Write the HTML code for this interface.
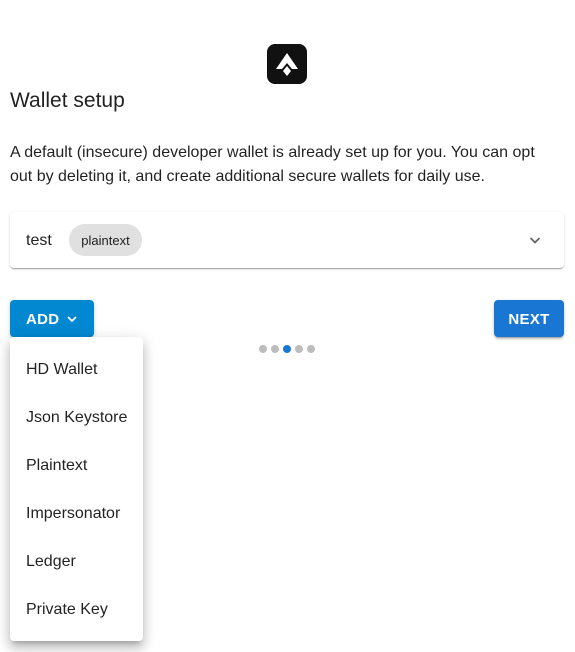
<!DOCTYPE html>
<html><head><style>
body{margin:0;width:575px;height:652px;background:#fff;font-family:"Liberation Sans",sans-serif;color:rgba(0,0,0,.87);position:relative;overflow:hidden}
.abs{position:absolute}
h1{position:absolute;left:10px;top:87px;margin:0;font-size:21px;font-weight:500;line-height:28px}
.desc{left:10px;top:141px;width:550px;font-size:16px;line-height:24px}
.card{left:10px;top:212px;width:554px;height:56px;border-radius:4px;box-shadow:0 2px 1px -1px rgba(0,0,0,.2),0 1px 1px rgba(0,0,0,.14),0 1px 3px rgba(0,0,0,.12)}
.chip{left:59px;top:12px;width:73px;height:32px;border-radius:16px;background:#e0e0e0;font-size:13px;line-height:33px;text-align:center}
.btn{color:#fff;font-size:15px;font-weight:bold;letter-spacing:.3px;border-radius:4px;box-shadow:0 3px 1px -2px rgba(0,0,0,.2),0 2px 2px rgba(0,0,0,.14),0 1px 5px rgba(0,0,0,.12);line-height:37px}
.dot{top:345px;width:8px;height:8px;border-radius:50%;background:#bdbdbd}
.menu{left:10px;top:337px;width:133px;height:304px;background:#fff;border-radius:4px;box-shadow:0 5px 5px -3px rgba(0,0,0,.2),0 8px 10px 1px rgba(0,0,0,.14),0 3px 14px 2px rgba(0,0,0,.12)}
.menu div{height:48px;line-height:50px;padding-left:16px;font-size:16px}
</style></head><body>
<svg class="abs" style="left:267px;top:44px" width="40" height="40" viewBox="0 0 40 40">
<rect width="40" height="40" rx="8" fill="#111"/>
<path d="M20 9 L31 25 L25 25 L20 19 L15 25 L9 25 Z" fill="#fff"/>
<path d="M20 22 L24 27 L20 32 L16 27 Z" fill="#fff"/>
</svg>
<h1>Wallet setup</h1>
<div class="abs desc">A default (insecure) developer wallet is already set up for you. You can opt out by deleting it, and create additional secure wallets for daily use.</div>
<div class="abs card">
<div class="abs" style="left:16px;top:1px;line-height:56px;font-size:16px">test</div>
<div class="abs chip">plaintext</div>
<svg class="abs" style="left:518px;top:21px" width="14" height="14" viewBox="0 0 14 14"><path d="M2.5 5 L7 9.5 L11.5 5" stroke="#666" stroke-width="1.8" fill="none"/></svg>
</div>
<div class="abs btn" style="left:10px;top:300px;width:84px;height:37px;background:#0288d1">
<span class="abs" style="left:16px;top:1px">ADD</span>
<svg class="abs" style="left:56px;top:13px" width="12" height="12" viewBox="0 0 12 12"><path d="M2 4 L6 8 L10 4" stroke="#fff" stroke-width="1.8" fill="none"/></svg>
</div>
<div class="abs btn" style="left:494px;top:300px;width:70px;height:37px;background:#1976d2;text-align:center"><span style="position:relative;top:1px">NEXT</span></div>
<div class="abs dot" style="left:259px"></div>
<div class="abs dot" style="left:271px"></div>
<div class="abs dot" style="left:283px;background:#1976d2"></div>
<div class="abs dot" style="left:295px"></div>
<div class="abs dot" style="left:307px"></div>
<div class="abs menu" style="padding-top:8px;box-sizing:border-box">
<div>HD Wallet</div><div>Json Keystore</div><div>Plaintext</div><div>Impersonator</div><div>Ledger</div><div>Private Key</div>
</div>
</body></html>
